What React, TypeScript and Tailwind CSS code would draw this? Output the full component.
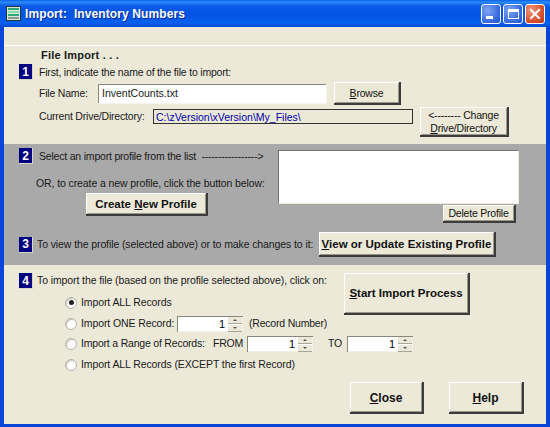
import React from 'react';

const raised = 'flex items-center justify-center pt-[2px] bg-[#ece9d8] border-r-2 border-b-2 border-[#3c3c3c] shadow-[inset_1px_1px_0_#ffffff,inset_-1px_-1px_0_#9a978a] text-[#111]';

function Badge({ n }: { n: number }) {
  return (
    <div className="w-[14px] h-[16px] shrink-0 bg-[#000080] border-r border-b border-[#d8d5c6] flex items-center justify-center text-white font-bold text-[12px] leading-none">
      {n}
    </div>
  );
}

function Radio({ on }: { on?: boolean }) {
  return (
    <span className="w-[12px] h-[12px] shrink-0 rounded-full bg-white border border-[#b5b3a8] shadow-[inset_1px_1px_1px_#c8c6ba] flex items-center justify-center">
      {on && <span className="w-[5px] h-[5px] rounded-full bg-[#222]" />}
    </span>
  );
}

function Spinner({ className }: { className: string }) {
  return (
    <div className={`flex h-[16px] w-[66px] bg-white border-l border-t border-[#8a887c] shadow-[inset_-1px_-1px_0_#f4f2e6] ${className}`}>
      <div className="flex-1 text-right pr-[3px] text-[11px] leading-[15px] text-black">1</div>
      <div className="w-[14px] mr-[1px] flex flex-col gap-[1px]">
        <div className="flex-1 bg-[#ece9d8] border-b border-[#a8a698] flex items-center justify-center">
          <span className="w-0 h-0 border-x-[2px] border-x-transparent border-b-[2px] border-b-[#555]" />
        </div>
        <div className="flex-1 bg-[#ece9d8] border-b border-[#a8a698] flex items-center justify-center">
          <span className="w-0 h-0 border-x-[2px] border-x-transparent border-t-[2px] border-t-[#555]" />
        </div>
      </div>
    </div>
  );
}

function WinButton({ children, close }: { children: React.ReactNode; close?: boolean }) {
  return (
    <div
      className={`w-[20px] h-[20px] rounded-[3px] border border-white flex items-center justify-center ${
        close
          ? 'bg-[radial-gradient(circle_at_30%_30%,#ee9a7e,#d8532c_60%,#b8381a)]'
          : 'bg-[radial-gradient(circle_at_30%_30%,#7fa4f0,#3d6fe0_60%,#2250cc)]'
      }`}
    >
      {children}
    </div>
  );
}

export default function App() {
  return (
    <div className="w-[550px] h-[427px] flex flex-col overflow-hidden whitespace-nowrap bg-[#0846d8] font-['Liberation_Sans',Arial,sans-serif] text-[10.5px] tracking-[-0.2px] text-[#1a1a1a]">
      {/* title bar */}
      <div className="h-[27px] shrink-0 flex items-center pl-[6px] pr-[5px] bg-[linear-gradient(180deg,#0a5fe6_0%,#2a8cf8_8%,#0a5ae8_22%,#0354e6_55%,#0560f0_85%,#0348d0_100%)]">
        <svg width="15" height="15" viewBox="0 0 15 15" className="shrink-0">
          <rect x="0.5" y="0.5" width="14" height="14" fill="#d8e8d8" stroke="#28343c" />
          <rect x="2" y="2" width="11" height="2" fill="#2ea878" />
          <rect x="2" y="5" width="11" height="2" fill="#7fe0a8" />
          <rect x="2" y="8" width="11" height="2" fill="#2ea878" />
          <rect x="2" y="11" width="11" height="2" fill="#8a9a90" />
        </svg>
        <div className="ml-[4px] flex-1 text-white font-bold text-[12px] tracking-[0.1px] [text-shadow:1px_1px_0_#0a2a90]">
          Import:&nbsp; Inventory Numbers
        </div>
        <div className="flex gap-[2px]">
          <WinButton>
            <span className="w-[7px] h-[3px] bg-white mt-[8px] mr-[4px]" />
          </WinButton>
          <WinButton>
            <span className="w-[11px] h-[10px] border border-white border-t-[3px]" />
          </WinButton>
          <WinButton close>
            <svg width="12" height="12" viewBox="0 0 12 12">
              <path d="M2 2 L10 10 M10 2 L2 10" stroke="#fff" strokeWidth="2" strokeLinecap="square" />
            </svg>
          </WinButton>
        </div>
      </div>

      {/* dialog body */}
      <div className="flex-1 ml-[4px] mr-[4px] mb-[3px] bg-[#ece9d8] flex flex-col">
        {/* section 1 */}
        <div className="h-[117px] shrink-0">
          <div className="h-[19px] border-b border-white" />
          <div className="h-[18px] pl-[37px] font-bold leading-[18px] text-[11px] tracking-[0.2px]">File Import . . .</div>
          <div className="h-[16px] flex items-center">
            <div className="ml-[15px]"><Badge n={1} /></div>
            <span className="ml-[6px] pt-[2px]">First, indicate the name of the file to import:</span>
          </div>
          <div className="mt-[2px] h-[23px] flex items-center">
            <span className="pl-[35px] w-[94px] shrink-0 pt-[1px]">File Name:</span>
            <div className="w-[228px] h-[19px] bg-white border-l border-t border-[#8a887c] shadow-[1px_1px_0_#f8f6ec] pl-[3px] leading-[16px] tracking-normal">InventCounts.txt</div>
            <div className={`${raised} ml-[8px] w-[67px] h-[23px]`}>
              <span><u>B</u>rowse</span>
            </div>
          </div>
          <div className="mt-[2px] h-[30px] flex items-start">
            <span className="pl-[35px] w-[149px] shrink-0 leading-[18px]">Current Drive/Directory:</span>
            <div className="mt-[2px] w-[260px] h-[15px] border border-[#333] pl-[2px] leading-[14px] text-[#0000a8] tracking-normal">C:\zVersion\xVersion\My_Files\</div>
            <div className={`${raised} ml-[7px] w-[89px] h-[30px] flex-col leading-[13px]`}>
              <span>&lt;-------- Change</span>
              <span><u>D</u>rive/Directory</span>
            </div>
          </div>
        </div>

        {/* section 2 */}
        <div className="h-[121px] shrink-0 bg-[#a9a9a9]">
          <div className="h-[79px] flex">
            <div className="w-[274px] shrink-0">
              <div className="pt-[4px] h-[20px] flex items-center">
                <div className="ml-[15px]"><Badge n={2} /></div>
                <span className="ml-[6px] pt-[2px]">Select an import profile from the list&nbsp; -----------------&gt;</span>
              </div>
              <div className="mt-[12px] h-[14px] pl-[32px] leading-[14px] tracking-[-0.1px]">OR, to create a new profile, click the button below:</div>
              <div className={`${raised} mt-[3px] ml-[82px] w-[122px] h-[23px] font-bold text-[11.5px] tracking-normal`}>
                <span>Create <u>N</u>ew Profile</span>
              </div>
            </div>
            <div className="w-[240px] shrink-0">
              <div className="mt-[6px] h-[53px] bg-white border-l border-t border-[#77756a] shadow-[1px_1px_0_#ece9d8]" />
              <div className={`${raised} mt-[2px] ml-[165px] w-[73px] h-[18px]`}>Delete Profile</div>
            </div>
          </div>
          <div className="mt-[9px] h-[25px] flex items-center">
            <div className="ml-[15px]"><Badge n={3} /></div>
            <span className="ml-[4px] w-[282px] shrink-0 tracking-[-0.1px]">To view the profile (selected above) or to make changes to it:</span>
            <div className={`${raised} w-[177px] h-[25px] font-bold text-[11.5px] tracking-normal`}>
              <span><u>V</u>iew or Update Existing Profile</span>
            </div>
          </div>
        </div>

        {/* section 3 */}
        <div className="flex-1">
          <div className="h-[48px] flex items-start">
            <div className="w-[340px] shrink-0">
              <div className="mt-[8px] h-[16px] flex items-center">
                <div className="ml-[15px]"><Badge n={4} /></div>
                <span className="ml-[4px] tracking-[-0.1px]">To import the file (based on the profile selected above), click on:</span>
              </div>
              <div className="mt-[3px] h-[21px] pl-[61px] flex items-center gap-[4px]">
                <Radio on />
                <span className="tracking-[-0.1px]">Import ALL Records</span>
              </div>
            </div>
            <div className={`${raised} mt-[8px] w-[126px] h-[42px] font-bold text-[11.5px] tracking-normal`}>
              <span><u>S</u>tart Import Process</span>
            </div>
          </div>
          <div className="h-[21px] pl-[61px] flex items-center gap-[4px]">
            <Radio />
            <span className="w-[92px] shrink-0 tracking-[-0.1px]">Import ONE Record:</span>
            <Spinner className="shrink-0" />
            <span className="ml-[2px]">(Record Number)</span>
          </div>
          <div className="h-[20px] pl-[61px] flex items-center gap-[4px]">
            <Radio />
            <span className="w-[128px] shrink-0">Import a Range of Records:</span>
            <span className="w-[30px] shrink-0">FROM</span>
            <Spinner className="shrink-0" />
            <span className="ml-[11px] w-[15px] shrink-0">TO</span>
            <Spinner className="shrink-0" />
          </div>
          <div className="h-[21px] pl-[61px] flex items-center gap-[4px]">
            <Radio />
            <span className="tracking-[-0.1px]">Import ALL Records (EXCEPT the first Record)</span>
          </div>
          <div className="mt-[7px] ml-[346px] flex gap-[25px]">
            <div className={`${raised} w-[74px] h-[32px] font-bold text-[12px] tracking-normal`}>
              <span><u>C</u>lose</span>
            </div>
            <div className={`${raised} w-[75px] h-[32px] font-bold text-[12px] tracking-normal`}>
              <span><u>H</u>elp</span>
            </div>
          </div>
        </div>
      </div>
    </div>
  );
}
